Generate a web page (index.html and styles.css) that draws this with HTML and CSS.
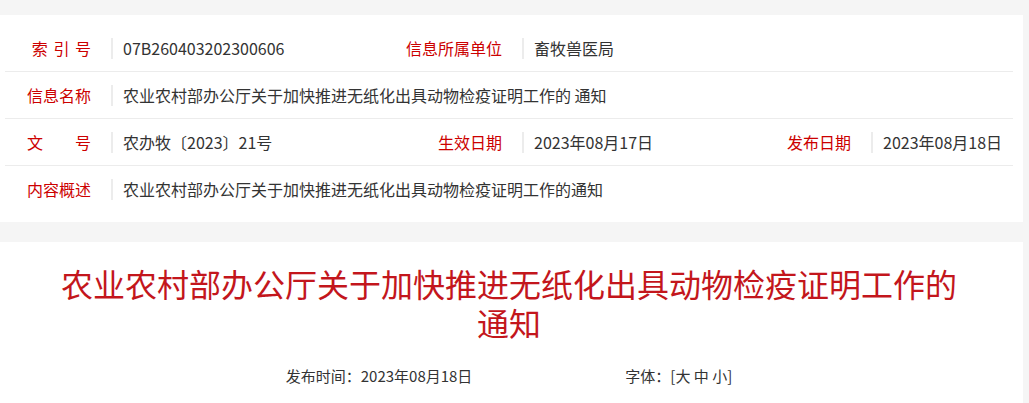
FILE: index.html
```html
<!DOCTYPE html>
<html lang="zh-CN">
<head>
<meta charset="utf-8">
<title>通知</title>
<link rel="stylesheet" href="styles.css">
</head>
<body>
<div class="page">
  <section class="card info">
    <div class="row">
      <div class="label"><span class="spaced">索 引 号</span></div>
      <div class="value">07B260403202300606</div>
      <div class="label"><span>信息所属单位</span></div>
      <div class="value span-rest">畜牧兽医局</div>
    </div>
    <div class="row">
      <div class="label"><span>信息名称</span></div>
      <div class="value span-all">农业农村部办公厅关于加快推进无纸化出具动物检疫证明工作的 通知</div>
    </div>
    <div class="row">
      <div class="label"><span>文&emsp;&emsp;号</span></div>
      <div class="value">农办牧〔2023〕21号</div>
      <div class="label"><span>生效日期</span></div>
      <div class="value">2023年08月17日</div>
      <div class="label"><span>发布日期</span></div>
      <div class="value">2023年08月18日</div>
    </div>
    <div class="row last">
      <div class="label"><span>内容概述</span></div>
      <div class="value span-all">农业农村部办公厅关于加快推进无纸化出具动物检疫证明工作的通知</div>
    </div>
  </section>
  <section class="card article">
    <h1 class="title">农业农村部办公厅关于加快推进无纸化出具动物检疫证明工作的<br>通知</h1>
    <div class="meta">
      <span class="meta-item">发布时间：2023年08月18日</span>
      <span class="meta-item">字体：[大 中 小]</span>
    </div>
  </section>
</div>
</body>
</html>
```

FILE: styles.css
```css
* { box-sizing: border-box; }
html, body {
  margin: 0;
  padding: 0;
  background: #f5f5f5;
  font-family: "Noto Sans CJK SC", "Microsoft YaHei", "Noto Sans", sans-serif;
  color: #333;
}
.page {
  width: 1023px;
  padding-top: 15px;
}
.card {
  background: #fff;
}
.info {
  padding: 10px 10px 10px 5px;
}
.row {
  display: grid;
  grid-template-columns: 106px 305px 106px 243px 106px 1fr;
  align-items: center;
  height: 47px;
  border-bottom: 1px solid #ececec;
  font-size: 16px;
  line-height: 21px;
}
.row.last { border-bottom: none; height: 46px; }
.label {
  display: flex;
  justify-content: flex-end;
  color: #cc0000;
  padding-right: 20px;
  white-space: nowrap;
  min-width: 0;
}
.label span { flex: none; }
.label .spaced { word-spacing: 2px; }
.value {
  border-left: 2px solid #ececec;
  padding-left: 10px;
  color: #333;
  white-space: nowrap;
}
.span-all { grid-column: 2 / -1; }
.span-rest { grid-column: 4 / -1; }
.article {
  margin-top: 20px;
  padding: 22px 10px 20px 5px;
  min-height: 170px;
}
.title {
  margin: 0;
  text-align: center;
  color: #c3161c;
  font-size: 32px;
  font-weight: normal;
  line-height: 39px;
}
.meta {
  display: flex;
  justify-content: center;
  gap: 153px;
  margin-top: 24px;
  font-size: 15px;
  line-height: 20px;
  color: #333;
}
```
